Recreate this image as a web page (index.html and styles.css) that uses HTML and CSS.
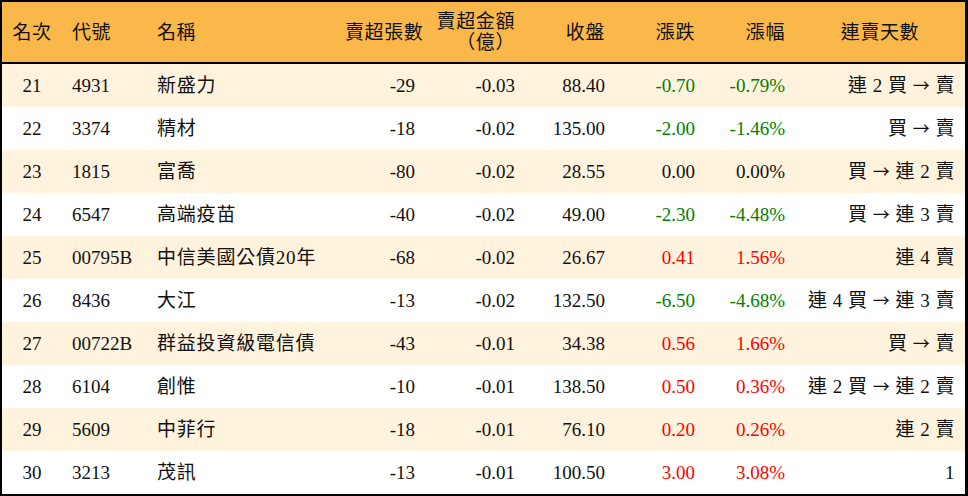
FILE: index.html
```html
<!DOCTYPE html>
<html lang="zh-Hant">
<head>
<meta charset="utf-8">
<title>賣超排行</title>
<link rel="stylesheet" href="styles.css">
</head>
<body>
<table class="rank">
  <colgroup>
    <col class="c-rank"><col class="c-code"><col class="c-name"><col class="c-vol"><col class="c-amt"><col class="c-close"><col class="c-chg"><col class="c-pct"><col class="c-days">
  </colgroup>
  <thead>
    <tr>
      <th class="ctr">名次</th>
      <th class="lft">代號</th>
      <th class="lft">名稱</th>
      <th class="rgt">賣超張數</th>
      <th class="rgt">賣超金額<br>（億）</th>
      <th class="rgt">收盤</th>
      <th class="rgt">漲跌</th>
      <th class="rgt">漲幅</th>
      <th class="ctr">連賣天數</th>
    </tr>
  </thead>
  <tbody>
    <tr><td class="ctr">21</td><td>4931</td><td class="name">新盛力</td><td class="rgt">-29</td><td class="rgt">-0.03</td><td class="rgt">88.40</td><td class="rgt dn">-0.70</td><td class="rgt dn">-0.79%</td><td class="rgt days">連 2 買 <span class="arr">→</span> 賣</td></tr>
    <tr><td class="ctr">22</td><td>3374</td><td class="name">精材</td><td class="rgt">-18</td><td class="rgt">-0.02</td><td class="rgt">135.00</td><td class="rgt dn">-2.00</td><td class="rgt dn">-1.46%</td><td class="rgt days">買 <span class="arr">→</span> 賣</td></tr>
    <tr><td class="ctr">23</td><td>1815</td><td class="name">富喬</td><td class="rgt">-80</td><td class="rgt">-0.02</td><td class="rgt">28.55</td><td class="rgt">0.00</td><td class="rgt">0.00%</td><td class="rgt days">買 <span class="arr">→</span> 連 2 賣</td></tr>
    <tr><td class="ctr">24</td><td>6547</td><td class="name">高端疫苗</td><td class="rgt">-40</td><td class="rgt">-0.02</td><td class="rgt">49.00</td><td class="rgt dn">-2.30</td><td class="rgt dn">-4.48%</td><td class="rgt days">買 <span class="arr">→</span> 連 3 賣</td></tr>
    <tr><td class="ctr">25</td><td>00795B</td><td class="name">中信美國公債20年</td><td class="rgt">-68</td><td class="rgt">-0.02</td><td class="rgt">26.67</td><td class="rgt up">0.41</td><td class="rgt up">1.56%</td><td class="rgt days">連 4 賣</td></tr>
    <tr><td class="ctr">26</td><td>8436</td><td class="name">大江</td><td class="rgt">-13</td><td class="rgt">-0.02</td><td class="rgt">132.50</td><td class="rgt dn">-6.50</td><td class="rgt dn">-4.68%</td><td class="rgt days">連 4 買 <span class="arr">→</span> 連 3 賣</td></tr>
    <tr><td class="ctr">27</td><td>00722B</td><td class="name">群益投資級電信債</td><td class="rgt">-43</td><td class="rgt">-0.01</td><td class="rgt">34.38</td><td class="rgt up">0.56</td><td class="rgt up">1.66%</td><td class="rgt days">買 <span class="arr">→</span> 賣</td></tr>
    <tr><td class="ctr">28</td><td>6104</td><td class="name">創惟</td><td class="rgt">-10</td><td class="rgt">-0.01</td><td class="rgt">138.50</td><td class="rgt up">0.50</td><td class="rgt up">0.36%</td><td class="rgt days">連 2 買 <span class="arr">→</span> 連 2 賣</td></tr>
    <tr><td class="ctr">29</td><td>5609</td><td class="name">中菲行</td><td class="rgt">-18</td><td class="rgt">-0.01</td><td class="rgt">76.10</td><td class="rgt up">0.20</td><td class="rgt up">0.26%</td><td class="rgt days">連 2 賣</td></tr>
    <tr><td class="ctr">30</td><td>3213</td><td class="name">茂訊</td><td class="rgt">-13</td><td class="rgt">-0.01</td><td class="rgt">100.50</td><td class="rgt up">3.00</td><td class="rgt up">3.08%</td><td class="rgt days">1</td></tr>
  </tbody>
</table>
</body>
</html>
```
FILE: styles.css
```css
html, body {
  margin: 0;
  padding: 0;
  background: #ffffff;
}

body {
  font-family: "Liberation Serif", "Noto Sans CJK TC", serif;
  font-size: 19px;
  color: #111111;
}

.rank {
  width: 968px;
  table-layout: fixed;
  border-collapse: separate;
  border-spacing: 0;
  border-top: 2px solid #000;
  border-left: 2px solid #000;
  border-right: 3px solid #000;
  border-bottom: 2px solid #000;
}

.c-rank { width: 60px; }
.c-code { width: 85px; }
.c-name { width: 188px; }
.c-vol { width: 90px; }
.c-amt { width: 100px; }
.c-close { width: 90px; }
.c-chg { width: 90px; }
.c-pct { width: 90px; }
.c-days { width: 170px; }

.rank th {
  height: 60px;
  padding: 0 10px;
  background: #fbb84a;
  font-weight: normal;
  line-height: 21px;
  letter-spacing: 0.6px;
  border-bottom: 2px solid #000;
  white-space: nowrap;
}

.rank td {
  height: 43px;
  padding: 0 10px;
  line-height: 22px;
  white-space: nowrap;
  text-align: left;
}

.rank td.name { letter-spacing: 0.8px; }
.rank td.days { letter-spacing: 0.5px; }

.rank tbody tr:nth-child(odd) td {
  background: #fff3de;
}

.rank .ctr { text-align: center; }
.rank .lft { text-align: left; }
.rank .rgt { text-align: right; }

.rank .dn { color: #008000; }
.rank .up { color: #ff0000; }

.arr {
  font-family: "Noto Sans CJK TC", sans-serif;
  font-size: 17px;
}
```
